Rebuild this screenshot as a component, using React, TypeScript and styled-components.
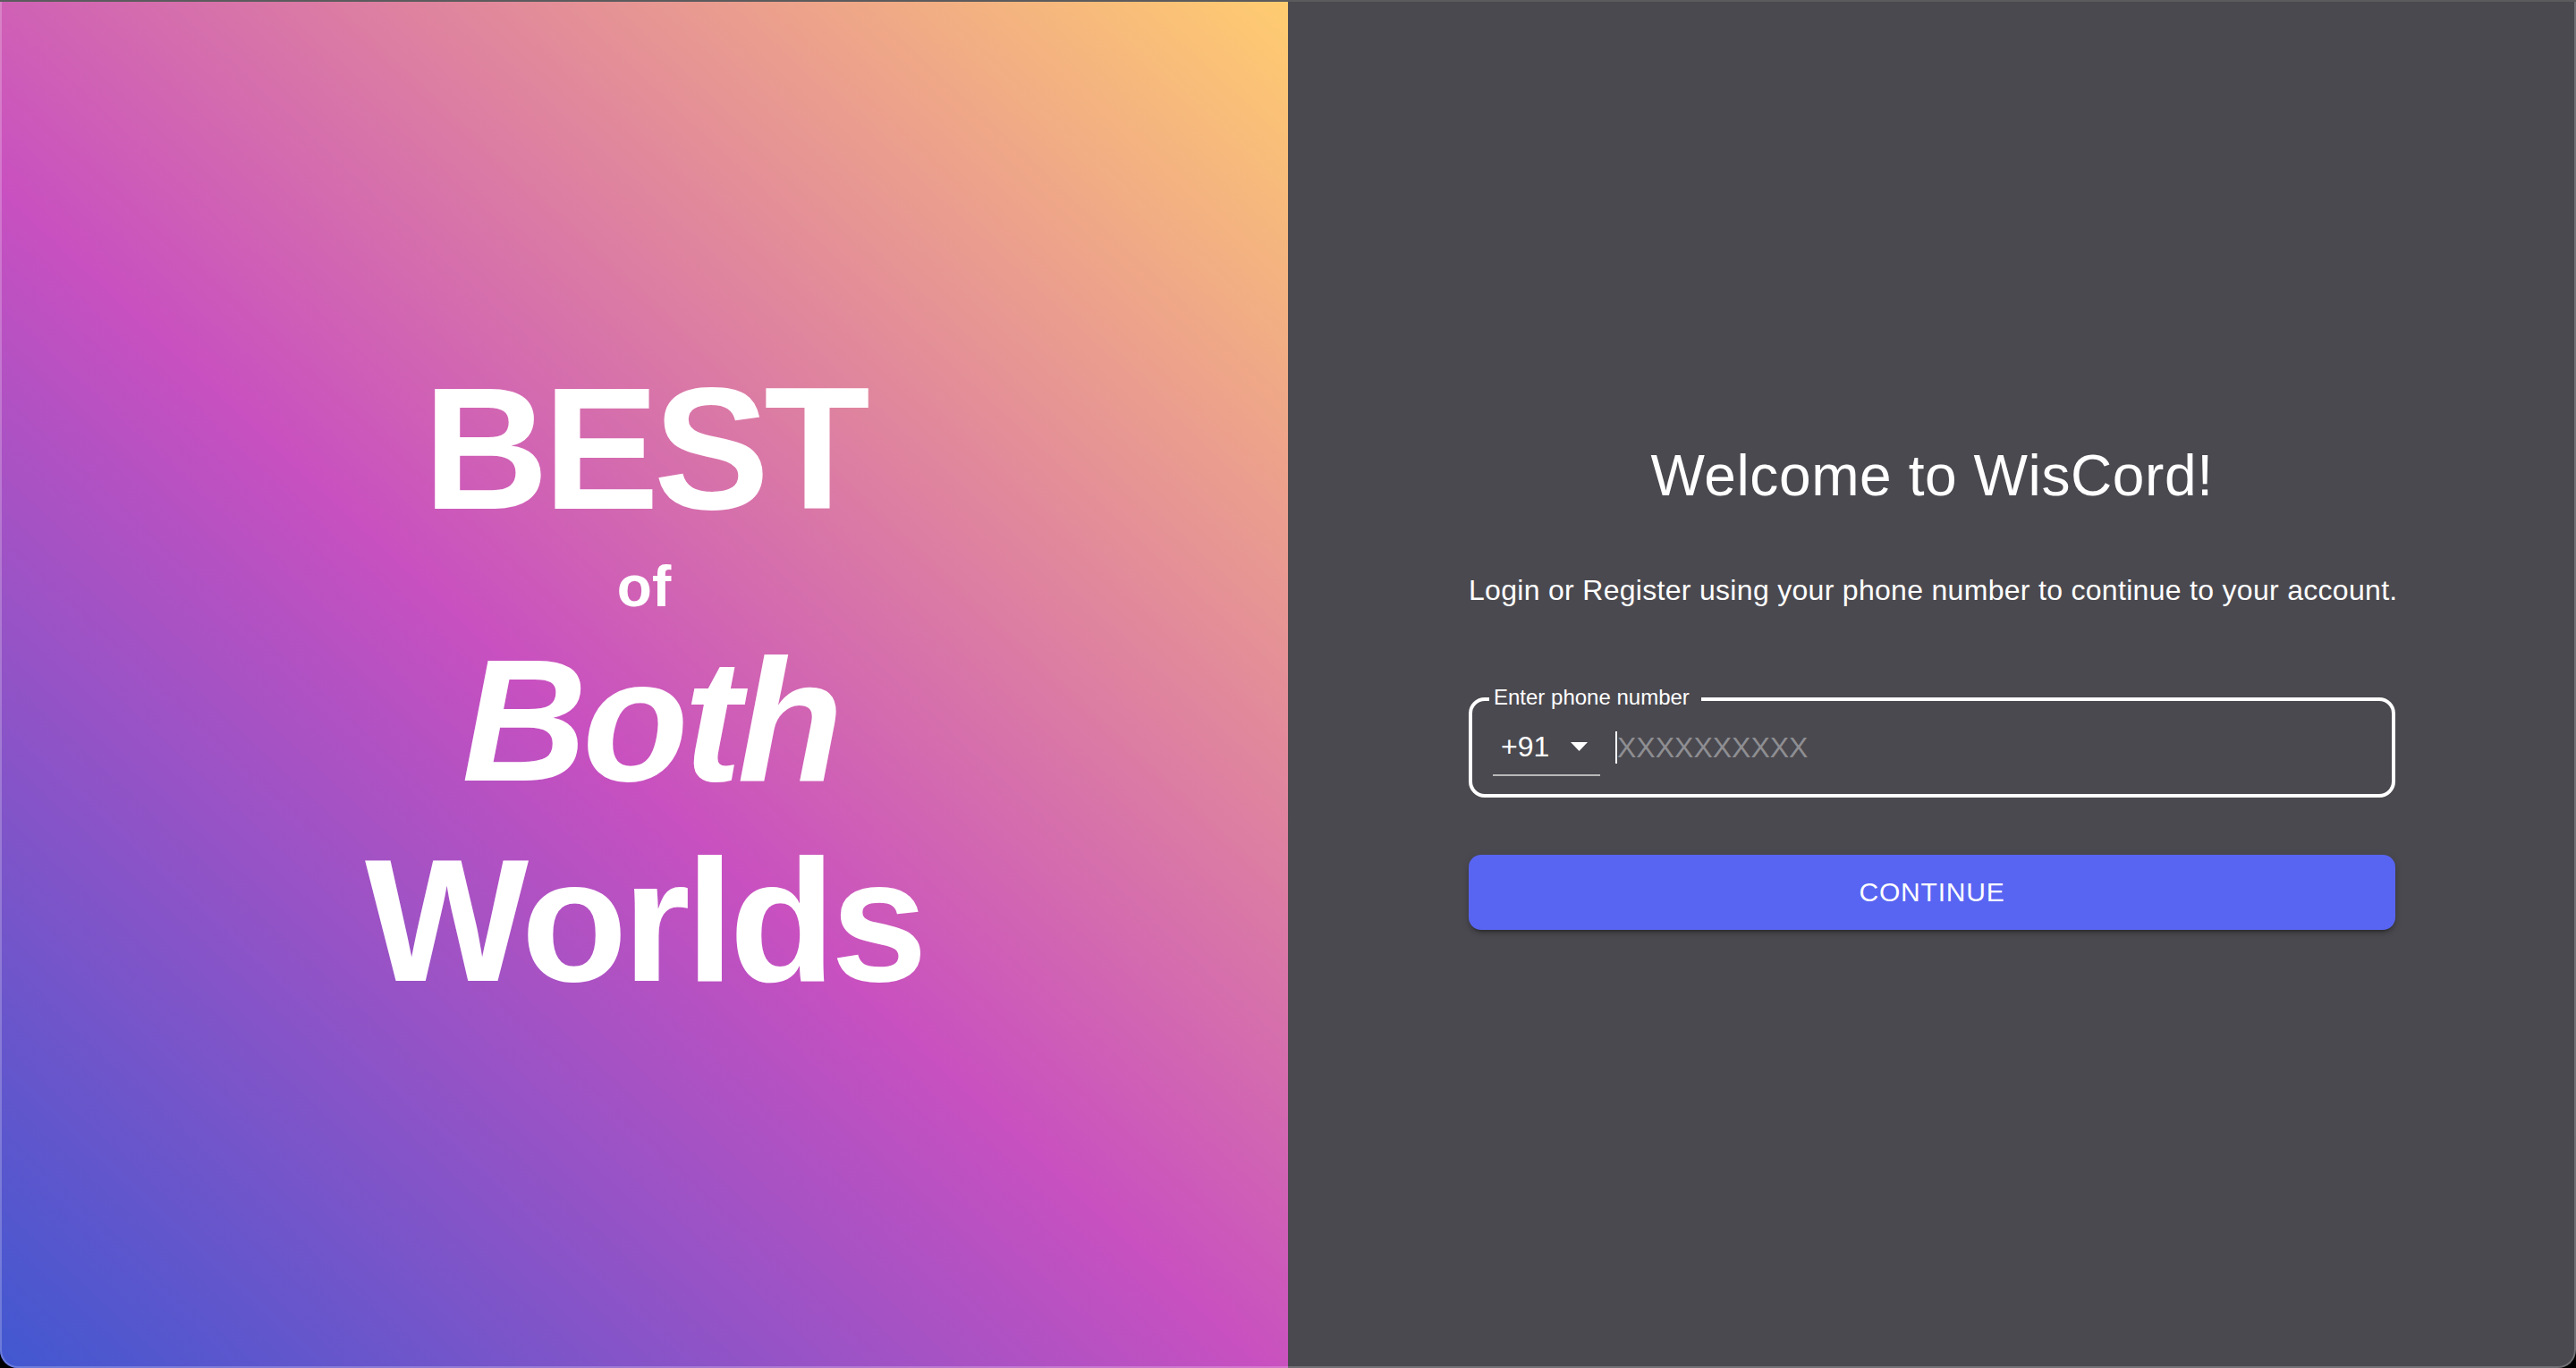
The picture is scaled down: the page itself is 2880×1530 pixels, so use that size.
import React from "react";
import styled, { createGlobalStyle } from "styled-components";

const GlobalStyle = createGlobalStyle`
  html, body {
    margin: 0;
    padding: 0;
    background: #000;
  }
  body {
    font-family: "Liberation Sans", Arial, sans-serif;
  }
  * {
    box-sizing: border-box;
  }
`;

const Window = styled.div`
  position: relative;
  width: 2880px;
  height: 1530px;
  border-top: 2px solid #5b5b5d;
  border-radius: 0 0 20px 20px;
  overflow: hidden;
  display: grid;
  grid-template-columns: 1440px 1440px;

  &::after {
    content: "";
    position: absolute;
    inset: 0;
    border: 2px solid rgba(255, 255, 255, 0.22);
    border-top: none;
    border-radius: 0 0 20px 20px;
    pointer-events: none;
  }
`;

const HeroPanel = styled.section`
  background-color: #4158d0;
  background-image: linear-gradient(43deg, #4158d0 0%, #c850c0 46%, #ffcc70 100%);
  display: flex;
  flex-direction: column;
  align-items: center;
  justify-content: center;
  color: #fff;
`;

const HeroLine = styled.span<{
  $size: number;
  $italic?: boolean;
  $gap?: number;
  $track?: number;
  $indent?: number;
}>`
  display: block;
  font-family: "Liberation Sans", Arial, sans-serif;
  font-weight: 700;
  font-size: ${(p) => p.$size}px;
  font-style: ${(p) => (p.$italic ? "italic" : "normal")};
  letter-spacing: ${(p) => p.$track ?? 0}px;
  line-height: 1;
  margin-top: ${(p) => p.$gap ?? 0}px;
  padding-left: ${(p) => p.$indent ?? 0}px;
  text-align: center;
`;

const FormPanel = styled.section`
  background: #4a494f;
  display: flex;
  flex-direction: column;
  align-items: center;
  justify-content: center;
  padding-top: 8px;
  color: #fff;
`;

const FormBox = styled.div`
  width: 1036px;
  display: flex;
  flex-direction: column;
`;

const Title = styled.h1`
  margin: 0;
  font-size: 64px;
  font-weight: 400;
  letter-spacing: 0.6px;
  line-height: 1;
  text-align: center;
  white-space: nowrap;
`;

const Subtitle = styled.p`
  margin: 80px 0 0;
  font-size: 32px;
  letter-spacing: 0.3px;
  line-height: 1;
  text-align: center;
  white-space: nowrap;
`;

const Field = styled.div`
  position: relative;
  margin-top: 104px;
  height: 112px;
  border: 4px solid #fff;
  border-radius: 18px;
  display: flex;
  align-items: center;
  padding-left: 23px;
`;

const FieldLabel = styled.label`
  position: absolute;
  top: -16px;
  left: 19px;
  padding: 0 13px 0 5px;
  background: #4a494f;
  font-size: 24px;
  line-height: 1;
  color: #fff;
  white-space: nowrap;
`;

const CodeSelect = styled.div`
  width: 120px;
  height: 64px;
  border-bottom: 2px solid #b8b8ba;
  display: flex;
  align-items: center;
  justify-content: space-between;
  padding: 0 14px 0 9px;
  font-size: 32px;
  color: #fff;
`;

const Caret = styled.span`
  width: 2px;
  height: 36px;
  margin-left: 17px;
  background: #fff;
  flex: none;
`;

const PhoneInput = styled.input`
  flex: 1;
  height: 40px;
  border: none;
  outline: none;
  background: transparent;
  padding: 0;
  font-family: "Liberation Sans", Arial, sans-serif;
  font-size: 32px;
  color: #fff;

  &::placeholder {
    color: #8e8e92;
    opacity: 1;
  }
`;

const ContinueButton = styled.button`
  margin-top: 64px;
  height: 84px;
  border: none;
  border-radius: 14px;
  background: #5865f2;
  color: #fff;
  font-family: "Liberation Sans", Arial, sans-serif;
  font-size: 30px;
  letter-spacing: 0.8px;
  text-transform: uppercase;
  box-shadow: 0 6px 2px -4px rgba(0, 0, 0, 0.2), 0 4px 4px 0 rgba(0, 0, 0, 0.14),
    0 2px 10px 0 rgba(0, 0, 0, 0.12);
  cursor: pointer;
`;

const DropArrow = () => (
  <svg width="19" height="10" viewBox="0 0 19 10" aria-hidden="true">
    <path d="M0 0 L19 0 L9.5 10 Z" fill="#fff" />
  </svg>
);

export default function App() {
  return (
    <>
      <GlobalStyle />
      <Window>
        <HeroPanel>
          <HeroLine $size={194} $track={-6}>
            BEST
          </HeroLine>
          <HeroLine $size={64} $gap={25}>
            of
          </HeroLine>
          <HeroLine $size={194} $italic $gap={21} $track={-5} $indent={14}>
            Both
          </HeroLine>
          <HeroLine $size={194} $gap={30} $track={-5}>
            Worlds
          </HeroLine>
        </HeroPanel>
        <FormPanel>
          <FormBox>
            <Title>Welcome to WisCord!</Title>
            <Subtitle>Login or Register using your phone number to continue to your account.</Subtitle>
            <Field>
              <FieldLabel>Enter phone number</FieldLabel>
              <CodeSelect>
                <span>+91</span>
                <DropArrow />
              </CodeSelect>
              <Caret />
              <PhoneInput placeholder="XXXXXXXXXX" />
            </Field>
            <ContinueButton>Continue</ContinueButton>
          </FormBox>
        </FormPanel>
      </Window>
    </>
  );
}
